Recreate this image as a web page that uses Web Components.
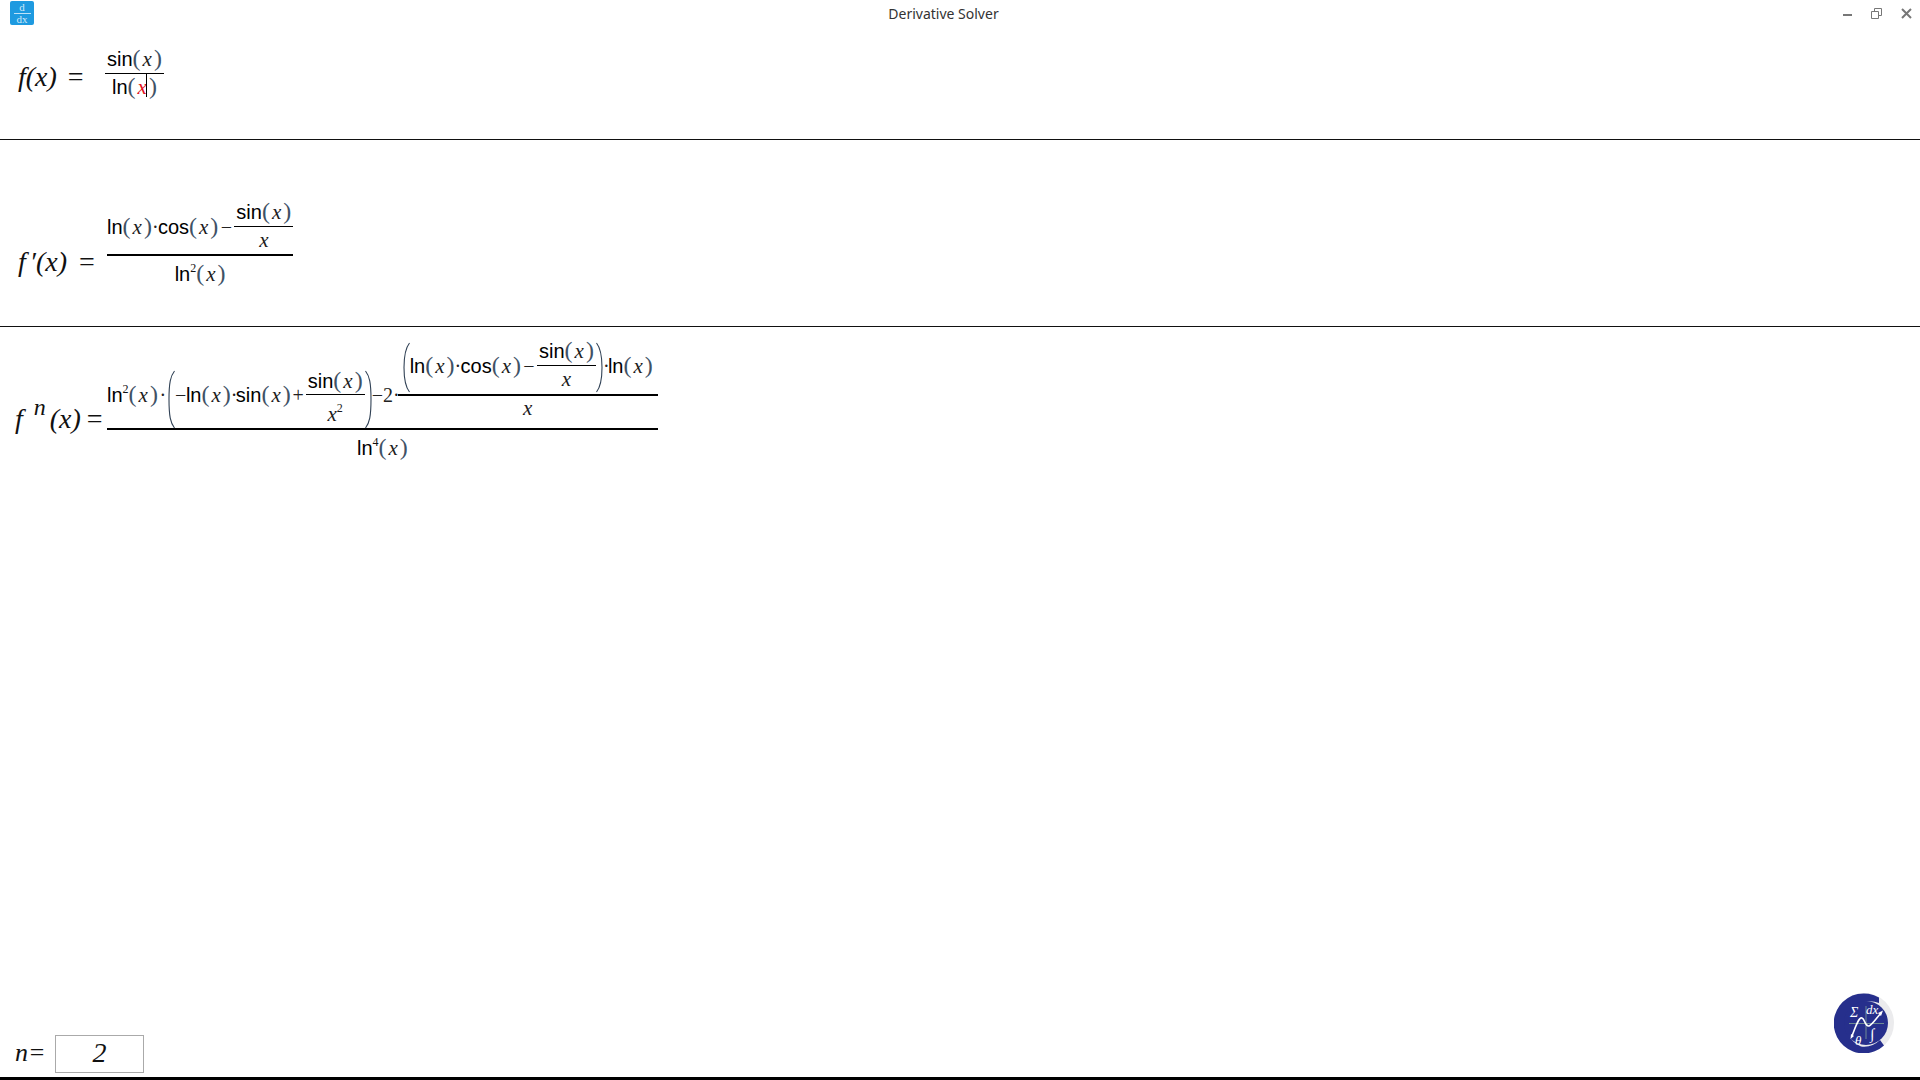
<!DOCTYPE html>
<html lang="en"><head><meta charset="utf-8"><title>Derivative Solver</title>
<style>html,body{margin:0;height:100%;background:#fff;overflow:hidden}</style></head>
<body>
<template id="t-app"><style>
:host{display:flex;flex-direction:column;width:1920px;height:1080px;position:relative;background:#fff;color:#000;font:20px/20px "Liberation Sans",sans-serif}
</style><slot></slot></template>
<template id="t-bar"><style>
:host{display:flex;align-items:center;height:28px;flex:none}
.ic{width:24px;height:24px;margin:-2px 0 0 10px;border-radius:2px;background:#1e9ae0;color:#cfe9f8;display:flex;flex-direction:column;align-items:center;justify-content:center}
.ic span{font:11px/9px "Liberation Serif",serif}
.ic i{display:block;width:17px;height:1px;background:#bfe2f7;margin:1px 0}
.t{flex:1;text-align:center;font:14px/28px "Noto Sans",sans-serif;color:#333;margin-right:-46px}
.b{display:flex;width:113px;flex:none;box-sizing:border-box;padding-left:36px;align-items:center}
svg{display:block;flex:none}
</style><div class="ic"><span>d</span><i></i><span>dx</span></div><div class="t">Derivative Solver</div>
<div class="b">
<svg width="9" height="2" style="margin:2px 19px 0 0"><rect width="9" height="2" fill="#777"/></svg>
<svg width="11" height="11" fill="none" stroke="#777" style="margin:-2px 19px 0 0"><path d="M.5 3.5h7v7h-7zM3.5 3V.5h7v7H8"/></svg>
<svg width="11" height="11" fill="none" stroke="#777" stroke-width="2" style="margin-top:-2px"><path d="M1 1l9 9M10 1l-9 9"/></svg>
</div></template>
<template id="t-row"><style>
:host{display:block;box-sizing:border-box;white-space:nowrap;flex:none;font:20px/20px "Liberation Sans",sans-serif;border-bottom:1px solid #111}
:host([last]){border-bottom:0}
</style><slot></slot></template>
<template id="t-label"><style>
:host{display:inline-block;font:italic 28px/20px "Liberation Serif",serif;color:#111;white-space:nowrap}
</style><slot></slot></template>
<template id="t-frac"><style>
:host{display:inline-block;text-align:center}
.n,.d{display:block;white-space:nowrap}
.b{background:#000}
</style><div class="n"><slot name="n"></slot></div><div class="b"></div><div class="d"><slot name="d"></slot></div></template>
<template id="t-call"><style>
:host{display:inline}
.s{font:12px/0 "Liberation Serif",serif;position:relative;top:-9px;color:#111}
.p{font:24px/0 "Liberation Serif",serif;color:#3f5266}
.x{font:italic 21px/0 "Liberation Serif",serif;color:#1c1c1c;margin:0 2px;position:relative}
.x.red{color:#e01020}
.c{position:absolute;left:8px;top:-1px;width:1px;height:23px;background:#000}
</style><span id="f"></span><span class="s" id="s"></span><span class="p">(</span><span class="x" id="x">x</span><span class="p">)</span></template>
<template id="t-big"><style>
:host{display:inline}
svg{overflow:visible}
</style><svg id="l" width="7"><path fill="none" stroke="#2f4054" stroke-width="1.1"/></svg><slot></slot><svg id="r" width="7"><path fill="none" stroke="#2f4054" stroke-width="1.1"/></svg></template>
<template id="t-sym"><style>
:host{display:inline-block;font:20px/20px "Liberation Serif",serif;color:#222;text-align:center}
</style><slot></slot></template>
<template id="t-logo"><style>
:host{position:absolute;left:1834px;top:993px;width:60px;height:60px;display:block}
svg{display:block}
text{fill:#fff;font-family:"Liberation Serif",serif;font-style:italic}
</style><svg width="60" height="60" viewBox="0 0 60 60">
<circle cx="30" cy="30" r="30" fill="#ebebed"/>
<path d="M45 4.6A30 30 0 1 0 50 52.5L46 47A23 23 0 0 1 27 53.5A23.5 23.5 0 0 1 45 10Z" fill="#262f8c"/>
<circle cx="32" cy="30" r="22" fill="#262f8c"/>
<path d="M15 30.500H50M32 13V46" stroke="#8fb39a" stroke-width=".7" fill="none"/>
<path d="M18 43C22 32 25 24 28 25C31 26 31 34 35 33C38 32 41 27 47 20" stroke="#fff" stroke-width="1.6" fill="none"/>
<path d="M16.500 46L17 41L20 43ZM49 17.500L44 20L47 23Z" fill="#fff"/>
<text x="16" y="24" font-size="14">Σ</text><text x="32" y="21" font-size="13">dx</text><text x="21" y="52" font-size="13">θ</text><text x="36" y="46" font-size="15">∫</text>
</svg></template>
<template id="t-n"><style>
:host{display:flex;align-items:flex-end;height:42px;padding:0 0 4px 15px;flex:none;box-sizing:content-box;font:italic 26px/28px "Liberation Serif",serif;color:#111}
.l{width:40px;flex:none;height:36px;line-height:32px}
.i{width:87px;height:36px;border:1px solid #aaa;text-align:center;line-height:34px;color:#111;background:#fff;font-size:28px}
</style><div class="l">n=</div><div class="i">2</div></template>
<template id="t-line"><style>:host{display:block;height:3px;background:#000;flex:none}</style></template>

<d-app>
  <d-bar></d-bar>
  <m-row style="height:112px;padding:21px 0 0 18px">
    <m-label w="87" drop="5"><span>f(x)</span><span style="display:inline-block;font-style:normal;margin-left:11px">=</span></m-label><m-frac n="4" d="3" pad="2">
      <span slot="n"><m-call f="sin"></m-call></span>
      <span slot="d"><m-call f="ln" red></m-call></span>
    </m-frac>
  </m-row>
  <m-row style="height:187px;padding:62px 0 0 18px">
    <m-label w="89" drop="9"><span>f</span><span style="margin-left:4px">′(x)</span><span style="display:inline-block;font-style:normal;margin-left:12px">=</span></m-label><m-frac n="4" d="8" bar="2" pad="0">
      <span slot="n"><m-call f="ln"></m-call><m-sym w="6">·</m-sym><m-call f="cos"></m-call><m-sym w="16">−</m-sym><m-frac n="4" d="3" pad="2">
        <span slot="n"><m-call f="sin"></m-call></span><span slot="d"><m-x></m-x></span>
      </m-frac></span>
      <span slot="d"><m-call f="ln" sup="2"></m-call></span>
    </m-frac>
  </m-row>
  <m-row last style="height:140px;padding:14px 0 0 15px">
    <m-label w="92" drop="-8"><span>f</span><span style="font-size:24px;position:relative;top:-13px;margin-left:11px">n</span><span style="margin-left:4px">(x)</span><span style="display:inline-block;font-style:normal;margin-left:6px">=</span></m-label><m-frac n="0" d="8" bar="2" pad="0">
      <span slot="n"><m-call f="ln" sup="2"></m-call><m-sym w="10">·</m-sym><m-big h="57" down="26"><m-sym w="11">−</m-sym><m-call f="ln"></m-call><m-sym w="5">·</m-sym><m-call f="sin"></m-call><m-sym w="15">+</m-sym><m-frac n="3" d="9" pad="2">
        <span slot="n"><m-call f="sin"></m-call></span><span slot="d"><m-x sup="2"></m-x></span>
      </m-frac></m-big><m-sym w="26">−2·</m-sym><m-frac n="2" d="2" bar="2" pad="5">
        <span slot="n"><m-big h="49" down="19"><m-call f="ln"></m-call><m-sym w="6">·</m-sym><m-call f="cos"></m-call><m-sym w="16">−</m-sym><m-frac n="4" d="3" pad="2">
          <span slot="n"><m-call f="sin"></m-call></span><span slot="d"><m-x></m-x></span>
        </m-frac></m-big><m-sym w="5">·</m-sym><m-call f="ln"></m-call></span>
        <span slot="d"><m-x></m-x></span>
      </m-frac></span>
      <span slot="d"><m-call f="ln" sup="4"></m-call></span>
    </m-frac>
  </m-row>
  <div style="flex:1"></div>
  <m-n></m-n>
  <m-bottom></m-bottom>
  <m-logo></m-logo>
</d-app>

<script>
function mk(name,tid,after){customElements.define(name,class extends HTMLElement{
  constructor(){super();this.attachShadow({mode:'open'}).appendChild(document.getElementById(tid).content.cloneNode(true));}
  connectedCallback(){after&&after(this,this.shadowRoot);}
});}
mk('d-app','t-app');
mk('d-bar','t-bar');
mk('m-row','t-row');
mk('m-label','t-label',(h)=>{h.style.width=h.getAttribute('w')+'px';h.style.verticalAlign=(-(+h.getAttribute('drop')))+'px';});
mk('m-frac','t-frac',(h,r)=>{
  const n=+h.getAttribute('n'),d=+h.getAttribute('d'),bar=+(h.getAttribute('bar')||1),pad=+(h.getAttribute('pad')||0),raise=+(h.getAttribute('raise')||0);
  r.querySelector('.n').style.padding='0 '+pad+'px '+n+'px';
  r.querySelector('.b').style.height=bar+'px';
  r.querySelector('.d').style.paddingTop=d+'px';
  h.style.verticalAlign=(raise-(d+10+bar/2))+'px';
});
mk('m-call','t-call',(h,r)=>{
  r.getElementById('f').textContent=h.getAttribute('f');
  r.getElementById('s').textContent=h.getAttribute('sup')||'';
  if(h.hasAttribute('red')){const x=r.getElementById('x');x.classList.add('red');const c=document.createElement('span');c.className='c';x.appendChild(c);}
});
mk('m-big','t-big',(h,r)=>{
  const H=+h.getAttribute('h'),D=+h.getAttribute('down');
  const l=r.getElementById('l'),g=r.getElementById('r');
  for(const s of [l,g]){s.setAttribute('height',H);s.style.verticalAlign=(-D)+'px';}
  l.querySelector('path').setAttribute('d','M6.5 0C2.5 5 1 12 1 '+(H/2)+'C1 '+(H-12)+' 2.5 '+(H-5)+' 6.500 '+H);
  g.querySelector('path').setAttribute('d','M.5 0C4.5 5 6 12 6 '+(H/2)+'C6 '+(H-12)+' 4.500 '+(H-5)+' .5 '+H);
});
mk('m-sym','t-sym',(h)=>{h.style.width=h.getAttribute('w')+'px';});
mk('m-logo','t-logo');
mk('m-n','t-n');
mk('m-bottom','t-line');
customElements.define('m-x',class extends HTMLElement{
  constructor(){super();this.attachShadow({mode:'open'}).innerHTML='<style>:host{display:inline;font:italic 21px/0 "Liberation Serif",serif;color:#1c1c1c}.s{font:normal 12px/0 "Liberation Serif",serif;position:relative;top:-9px}</style>x<span class="s" id="s"></span>';}
  connectedCallback(){this.shadowRoot.getElementById('s').textContent=this.getAttribute('sup')||'';}
});
</script>
</body></html>
